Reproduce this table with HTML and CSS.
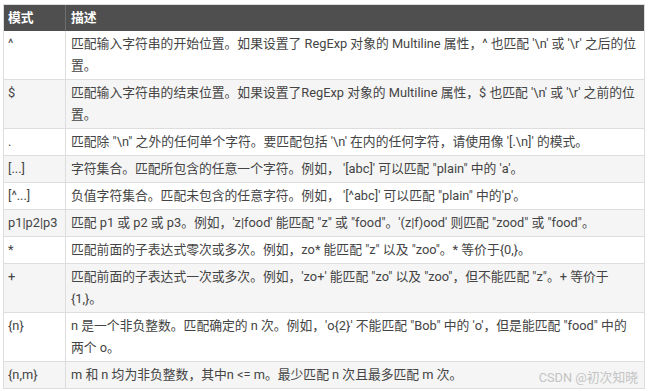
FILE: index.html
```html
<!DOCTYPE html>
<html lang="zh-CN">
<head>
<meta charset="utf-8">
<title>正则表达式模式</title>
<link rel="stylesheet" href="styles.css">
</head>
<body>
<div class="page">
  <table class="regex-table">
    <thead>
      <tr><th class="mode">模式</th><th class="desc">描述</th></tr>
    </thead>
    <tbody>
      <tr><td class="mode">^</td><td class="desc">匹配输入字符串的开始位置。如果设置了 RegExp 对象的 Multiline 属性，^ 也匹配 '\n' 或 '\r' 之后的位置。</td></tr>
      <tr><td class="mode">$</td><td class="desc">匹配输入字符串的结束位置。如果设置了RegExp 对象的 Multiline 属性，$ 也匹配 '\n' 或 '\r' 之前的位置。</td></tr>
      <tr><td class="mode">.</td><td class="desc">匹配除 "\n" 之外的任何单个字符。要匹配包括 '\n' 在内的任何字符，请使用像 '[.\n]' 的模式。</td></tr>
      <tr><td class="mode">[...]</td><td class="desc">字符集合。匹配所包含的任意一个字符。例如， '[abc]' 可以匹配 "plain" 中的 'a'。</td></tr>
      <tr><td class="mode">[^...]</td><td class="desc">负值字符集合。匹配未包含的任意字符。例如， '[^abc]' 可以匹配 "plain" 中的'p'。</td></tr>
      <tr><td class="mode">p1|p2|p3</td><td class="desc">匹配 p1 或 p2 或 p3。例如，'z|food' 能匹配 "z" 或 "food"。'(z|f)ood' 则匹配 "zood" 或 "food"。</td></tr>
      <tr><td class="mode">*</td><td class="desc">匹配前面的子表达式零次或多次。例如，zo* 能匹配 "z" 以及 "zoo"。* 等价于{0,}。</td></tr>
      <tr><td class="mode">+</td><td class="desc">匹配前面的子表达式一次或多次。例如，'zo+' 能匹配 "zo" 以及 "zoo"，但不能匹配 "z"。+ 等价于 {1,}。</td></tr>
      <tr><td class="mode">{n}</td><td class="desc">n 是一个非负整数。匹配确定的 n 次。例如，'o{2}' 不能匹配 "Bob" 中的 'o'，但是能匹配 "food" 中的两个 o。</td></tr>
      <tr><td class="mode">{n,m}</td><td class="desc">m 和 n 均为非负整数，其中n &lt;= m。最少匹配 n 次且最多匹配 m 次。</td></tr>
    </tbody>
  </table>
  <span class="watermark">CSDN @初次知晓</span>
</div>
</body>
</html>
```

FILE: styles.css
```css
html, body {
  margin: 0;
  padding: 0;
  background: #ffffff;
}

.page {
  position: relative;
  padding: 4px 5px 0 3px;
  font-family: Roboto, "Noto Sans CJK SC", sans-serif;
  font-size: 12.8px;
  color: #444444;
}

.regex-table {
  box-sizing: border-box;
  width: 642px;
  border-collapse: separate;
  border-spacing: 0;
  table-layout: fixed;
  border: 1px solid #dddddd;
}

.regex-table th,
.regex-table td {
  box-sizing: border-box;
  line-height: 22px;
  text-align: left;
  vertical-align: top;
  border-bottom: 1px solid #dddddd;
}

.regex-table tbody tr:last-child td {
  border-bottom: none;
}

.regex-table .mode {
  width: 62px;
  padding-left: 4px;
  padding-right: 2px;
  border-right: 1px solid #dddddd;
}

.regex-table .desc {
  padding-left: 5px;
  padding-right: 6.6px;
}

.regex-table th {
  background: #4f4f4f;
  color: #ffffff;
  font-weight: bold;
  padding-top: 2px;
  padding-bottom: 1px;
  border-bottom-color: #4f4f4f;
}

.regex-table th.mode {
  border-right-color: #6e6e6e;
}

.regex-table td {
  padding-top: 2px;
  padding-bottom: 2px;
}

.regex-table tbody tr:nth-child(odd) td { background: #ffffff; }
.regex-table tbody tr:nth-child(even) td { background: #f5f5f5; }

.watermark {
  position: absolute;
  right: 12px;
  top: 368px;
  line-height: 20px;
  color: #c4c4c4;
}
```
